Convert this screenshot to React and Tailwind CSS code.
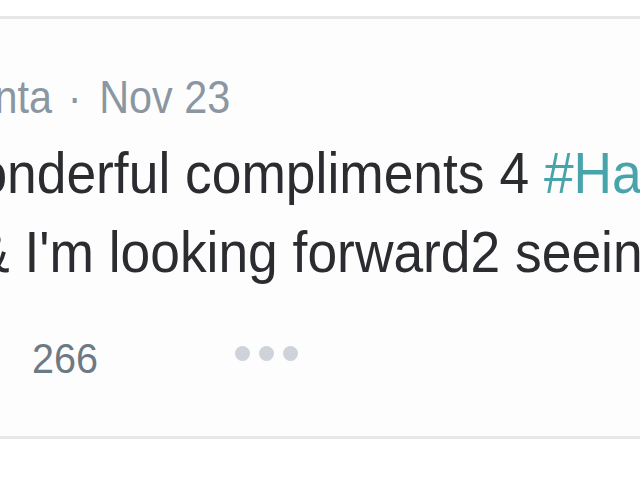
export default function App() {
  return (
    <div className="h-[480px] w-[640px] overflow-hidden bg-white" style={{ fontFamily: '"Liberation Sans", Arial, sans-serif' }}>
      <div className="h-[16px]" />
      <div className="h-[3px] bg-[#e6e7e8]" />
      <div className="h-[417px] overflow-hidden bg-[#fdfdfd]">
        <div className="mt-[54px] whitespace-nowrap">
          <span className="ml-[-63px] inline-block origin-left scale-x-[0.88] text-[47px] leading-none text-[#8a97a2]">
            <span>Manta</span>
            <span className="ml-[18px]">·</span>
            <span className="ml-[20px]">Nov 23</span>
          </span>
        </div>
        <div className="mt-[13px] whitespace-nowrap text-[58px] leading-[79px] text-[#2b2c30]">
          <div>
            <span className="ml-[-72px] inline-block origin-left scale-x-[0.92]">
              Wonderful compliments 4 <span className="text-[#47a4aa]">#HarryPotter</span>
            </span>
          </div>
          <div>
            <span className="ml-[-26px] inline-block origin-left scale-x-[0.92]">&amp; I'm looking forward2 seeing you</span>
          </div>
        </div>
        <div className="mt-[46px] flex items-start">
          <span className="ml-[32px] inline-block origin-left scale-x-[0.92] text-[43px] leading-none text-[#6c7a85]">266</span>
          <span className="ml-[131px] mt-[9px] flex gap-[9px]">
            <span className="h-[15px] w-[15px] rounded-full bg-[#cdd3d8]" />
            <span className="h-[15px] w-[15px] rounded-full bg-[#cdd3d8]" />
            <span className="h-[15px] w-[15px] rounded-full bg-[#cdd3d8]" />
          </span>
        </div>
      </div>
      <div className="h-[3px] bg-[#e6e7e8]" />
    </div>
  );
}
